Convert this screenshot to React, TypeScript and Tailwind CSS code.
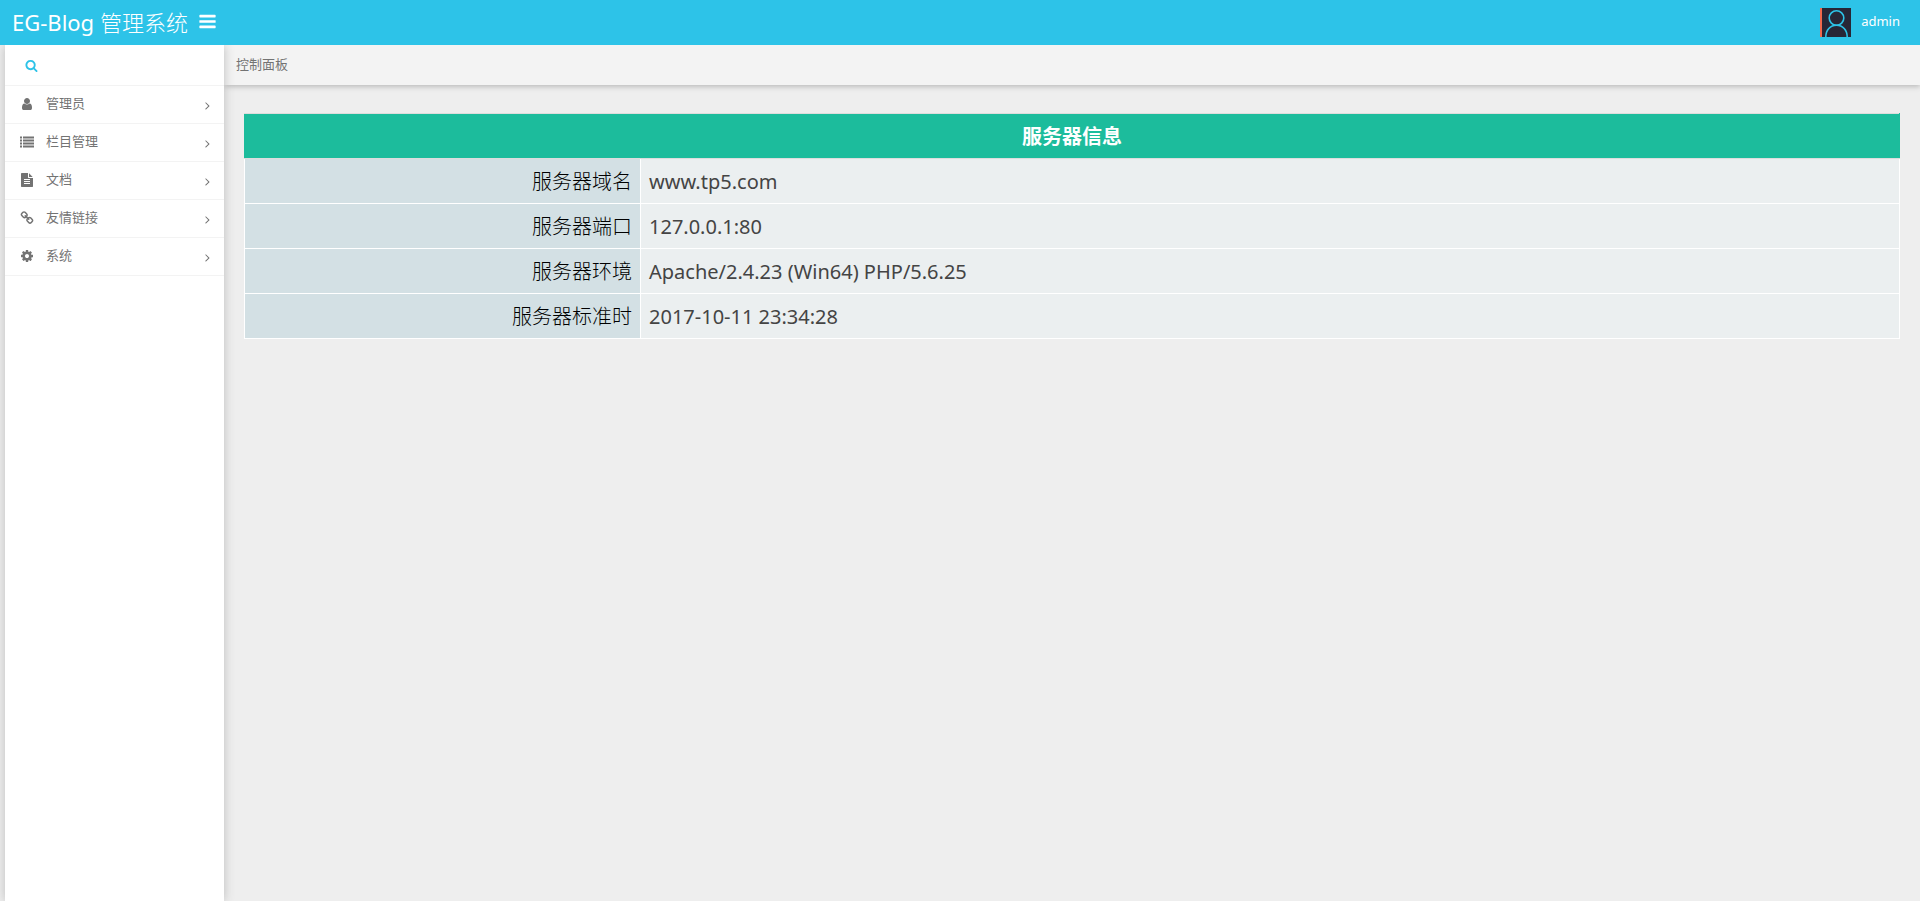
import React from "react";

const paths = {
  bars: "M1664 1344v128q0 26-19 45t-45 19H192q-26 0-45-19t-19-45v-128q0-26 19-45t45-19h1408q26 0 45 19t19 45zm0-512v128q0 26-19 45t-45 19H192q-26 0-45-19t-19-45V832q0-26 19-45t45-19h1408q26 0 45 19t19 45zm0-512v128q0 26-19 45t-45 19H192q-26 0-45-19t-19-45V320q0-26 19-45t45-19h1408q26 0 45 19t19 45z",
  search:
    "M1216 832q0-185-131.500-316.500t-316.500-131.500-316.500 131.500-131.500 316.500 131.500 316.500 316.500 131.500 316.500-131.500 131.500-316.500zm512 832q0 52-38 90t-90 38q-54 0-90-38l-343-342q-179 124-399 124-143 0-273.500-55.500t-225-150-150-225-55.500-273.500 55.500-273.500 150-225 225-150 273.500-55.500 273.500 55.500 225 150 150 225 55.500 273.500q0 220-124 399l343 343q37 37 37 90z",
  user: "M1536 1399q0 109-62.500 187t-150.500 78h-854q-88 0-150.500-78t-62.500-187q0-85 8.500-160.500t31.500-152 58.500-131 94-89 134.500-34.500q131 128 313 128t313-128q76 0 134.500 34.500t94 89 58.500 131 31.500 152 8.500 160.500zm-256-887q0 159-112.500 271.500t-271.500 112.500-271.500-112.500-112.500-271.500 112.500-271.500 271.500-112.500 271.500 112.500 112.500 271.500z",
  list: "M0 192h256v256H0zM0 576h256v256H0zM0 960h256v256H0zM0 1344h256v256H0zM384 192h1408v256H384zM384 576h1408v256H384zM384 960h1408v256H384zM384 1344h1408v256H384z",
  file: "M1596 476q14 14 28 36h-472v-472q22 14 36 28zm-476 164h544v1056q0 40-28 68t-68 28h-1344q-40 0-68-28t-28-68v-1600q0-40 28-68t68-28h800v544q0 40 28 68t68 28zm160 736v-64q0-14-9-23t-23-9h-704q-14 0-23 9t-9 23v64q0 14 9 23t23 9h704q14 0 23-9t9-23zm0-256v-64q0-14-9-23t-23-9h-704q-14 0-23 9t-9 23v64q0 14 9 23t23 9h704q14 0 23-9t9-23zm0-256v-64q0-14-9-23t-23-9h-704q-14 0-23 9t-9 23v64q0 14 9 23t23 9h704q14 0 23-9t9-23z",
  link: "M1520 1216q0-40-28-68l-208-208q-28-28-68-28-42 0-72 32 3 3 19 18.500t21.500 21.500 15 19 13 25.500 3.500 27.500q0 40-28 68t-68 28q-15 0-27.500-3.500t-25.500-13-19-15-21.500-21.500-18.500-19q-33 31-33 73 0 40 28 68l206 207q27 27 68 27 40 0 68-26l147-146q28-28 28-67zm-703-705q0-40-28-68l-206-207q-28-28-68-28-39 0-68 27l-147 146q-28 28-28 67 0 40 28 68l208 208q27 27 68 27 42 0 72-31-3-3-19-18.500t-21.500-21.500-15-19-13-25.500-3.500-27.500q0-40 28-68t68-28q15 0 27.500 3.500t25.500 13 19 15 21.500 21.500 18.500 19q33-31 33-73zm895 705q0 120-85 203l-147 146q-83 83-203 83-121 0-204-85l-206-207q-83-83-83-203 0-123 88-209l-88-88q-86 88-208 88-120 0-204-84l-208-208q-84-84-84-204t85-203l147-146q83-83 203-83 121 0 204 85l206 207q83 83 83 203 0 123-88 209l88 88q86-88 208-88 120 0 204 84l208 208q84 84 84 204z",
  cog: "M1152 896q0-106-75-181t-181-75-181 75-75 181 75 181 181 75 181-75 75-181zm512-109v222q0 12-8 23t-20 13l-185 28q-19 54-39 91 35 50 107 138 10 12 10 25t-9 23q-27 37-99 108t-94 71q-12 0-26-9l-138-108q-44 23-91 38-16 136-29 186-7 28-36 28h-222q-14 0-24.500-8.500t-11.500-21.500l-28-184q-49-16-90-37l-141 107q-10 9-25 9-14 0-25-11-126-114-165-168-7-10-7-23 0-12 8-23 15-21 51-66.500t54-70.500q-27-50-41-99l-183-27q-13-2-21-12.500t-8-23.500v-222q0-12 8-23t19-13l186-28q14-46 39-92-40-57-107-138-10-12-10-24 0-10 9-23 26-36 98.500-107.500t94.500-71.500q13 0 26 10l138 107q44-23 91-38 16-136 29-186 7-28 36-28h222q14 0 24.500 8.500t11.500 21.500l28 184q49 16 90 37l142-107q9-9 24-9 13 0 25 10 129 119 165 170 7 8 7 22 0 12-8 23-15 21-51 66.500t-54 70.500q26 50 41 98l183 28q13 2 21 12.500t8 23.500z",
  angle:
    "M1171 960q0 13-10 23l-466 466q-10 10-23 10t-23-10l-50-50q-10-10-10-23t10-23l393-393-393-393q-10-10-10-23t10-23l50-50q10-10 23-10t23 10l466 466q10 10 10 23z",
};

type IconName = keyof typeof paths;

function Icon({ name, className }: { name: IconName; className: string }) {
  return (
    <svg viewBox="0 0 1792 1792" fill="currentColor" aria-hidden="true" className={className}>
      <path d={paths[name]} />
    </svg>
  );
}

function Avatar() {
  return (
    <svg viewBox="0 0 31 29" aria-hidden="true" className="h-[29px] w-[31px]">
      <rect width="31" height="29" fill="#272636" />
      <rect width="2" height="29" fill="#f0684c" />
      <g fill="none" stroke="#2dc3e8" strokeWidth="1.6">
        <circle cx="16.500" cy="10" r="7.300" />
        <path d="M5.800 29c0-7 4.500-11.700 10.700-11.700S27.200 22 27.200 29" />
      </g>
    </svg>
  );
}

const menu: { label: string; icon: IconName }[] = [
  { label: "管理员", icon: "user" },
  { label: "栏目管理", icon: "list" },
  { label: "文档", icon: "file" },
  { label: "友情链接", icon: "link" },
  { label: "系统", icon: "cog" },
];

const rows = [
  ["服务器域名", "www.tp5.com"],
  ["服务器端口", "127.0.0.1:80"],
  ["服务器环境", "Apache/2.4.23 (Win64) PHP/5.6.25"],
  ["服务器标准时", "2017-10-11 23:34:28"],
];

export default function App() {
  return (
    <div className="flex min-h-screen flex-col bg-[#eee] font-['Noto_Sans','Noto_Sans_CJK_SC',sans-serif] text-[13px] text-[#737373]">
      <header className="relative z-20 flex h-[45px] items-center justify-between bg-[#2dc3e8] pr-5 pl-3 text-white">
        <div className="flex items-center gap-[10px]">
          <a href="#" className="pb-[2px] text-[22px] leading-[42px]">
            EG-Blog <span className="font-light">管理系统</span>
          </a>
          <button type="button" aria-label="菜单" className="pb-[2px]">
            <Icon name="bars" className="size-[19px]" />
          </button>
        </div>
        <a href="#" className="flex items-center gap-[10px]">
          <Avatar />
          <span className="pb-[2px] text-[13px]">admin</span>
        </a>
      </header>

      <div className="flex flex-1 pl-[5px]">
        <aside className="relative z-10 w-[219px] shrink-0 bg-white shadow-[0_0_10px_#bdbdbd]">
          <label className="flex h-10 items-center gap-2 pl-5 text-[#2dc3e8]">
            <Icon name="search" className="size-[13px]" />
            <input type="text" aria-label="搜索" className="w-40 outline-none" />
          </label>
          <nav>
            <ul className="border-b border-[#f3f3f3]">
              {menu.map(({ label, icon }) => (
                <li key={label}>
                  <a
                    href="#"
                    className="flex h-[38px] items-center border-t border-[#f3f3f3] pr-[10px] pb-[2px] pl-[15px]"
                  >
                    <Icon name={icon} className="size-[14px]" />
                    <span className="ml-3 flex-1">{label}</span>
                    <Icon name="angle" className="mt-1 size-[13px]" />
                  </a>
                </li>
              ))}
            </ul>
          </nav>
        </aside>

        <main className="min-w-0 flex-1">
          <div className="flex h-10 items-center bg-[#f3f3f3] px-3 shadow-[0_2px_5px_#bdbdbd]">控制面板</div>
          <div className="px-5 pt-7 pb-5">
            <table className="w-full border-collapse text-xl leading-7">
              <thead>
                <tr>
                  <th
                    colSpan={2}
                    className="h-[45px] border border-x-[#1cbc9c] border-y-[#ddd] bg-[#1cbc9c] px-2 pt-[9px] pb-[7px] text-center font-bold text-white"
                  >
                    服务器信息
                  </th>
                </tr>
              </thead>
              <tbody>
                {rows.map(([label, value]) => (
                  <tr key={label}>
                    <th
                      scope="row"
                      className="w-[396px] border border-white bg-[#d3e0e4] px-2 pt-[9px] pb-[7px] text-right font-light text-black"
                    >
                      {label}
                    </th>
                    <td className="border border-white bg-[#ebeff0] px-2 pt-[9px] pb-[7px] text-[#444]">{value}</td>
                  </tr>
                ))}
              </tbody>
            </table>
          </div>
        </main>
      </div>
    </div>
  );
}
